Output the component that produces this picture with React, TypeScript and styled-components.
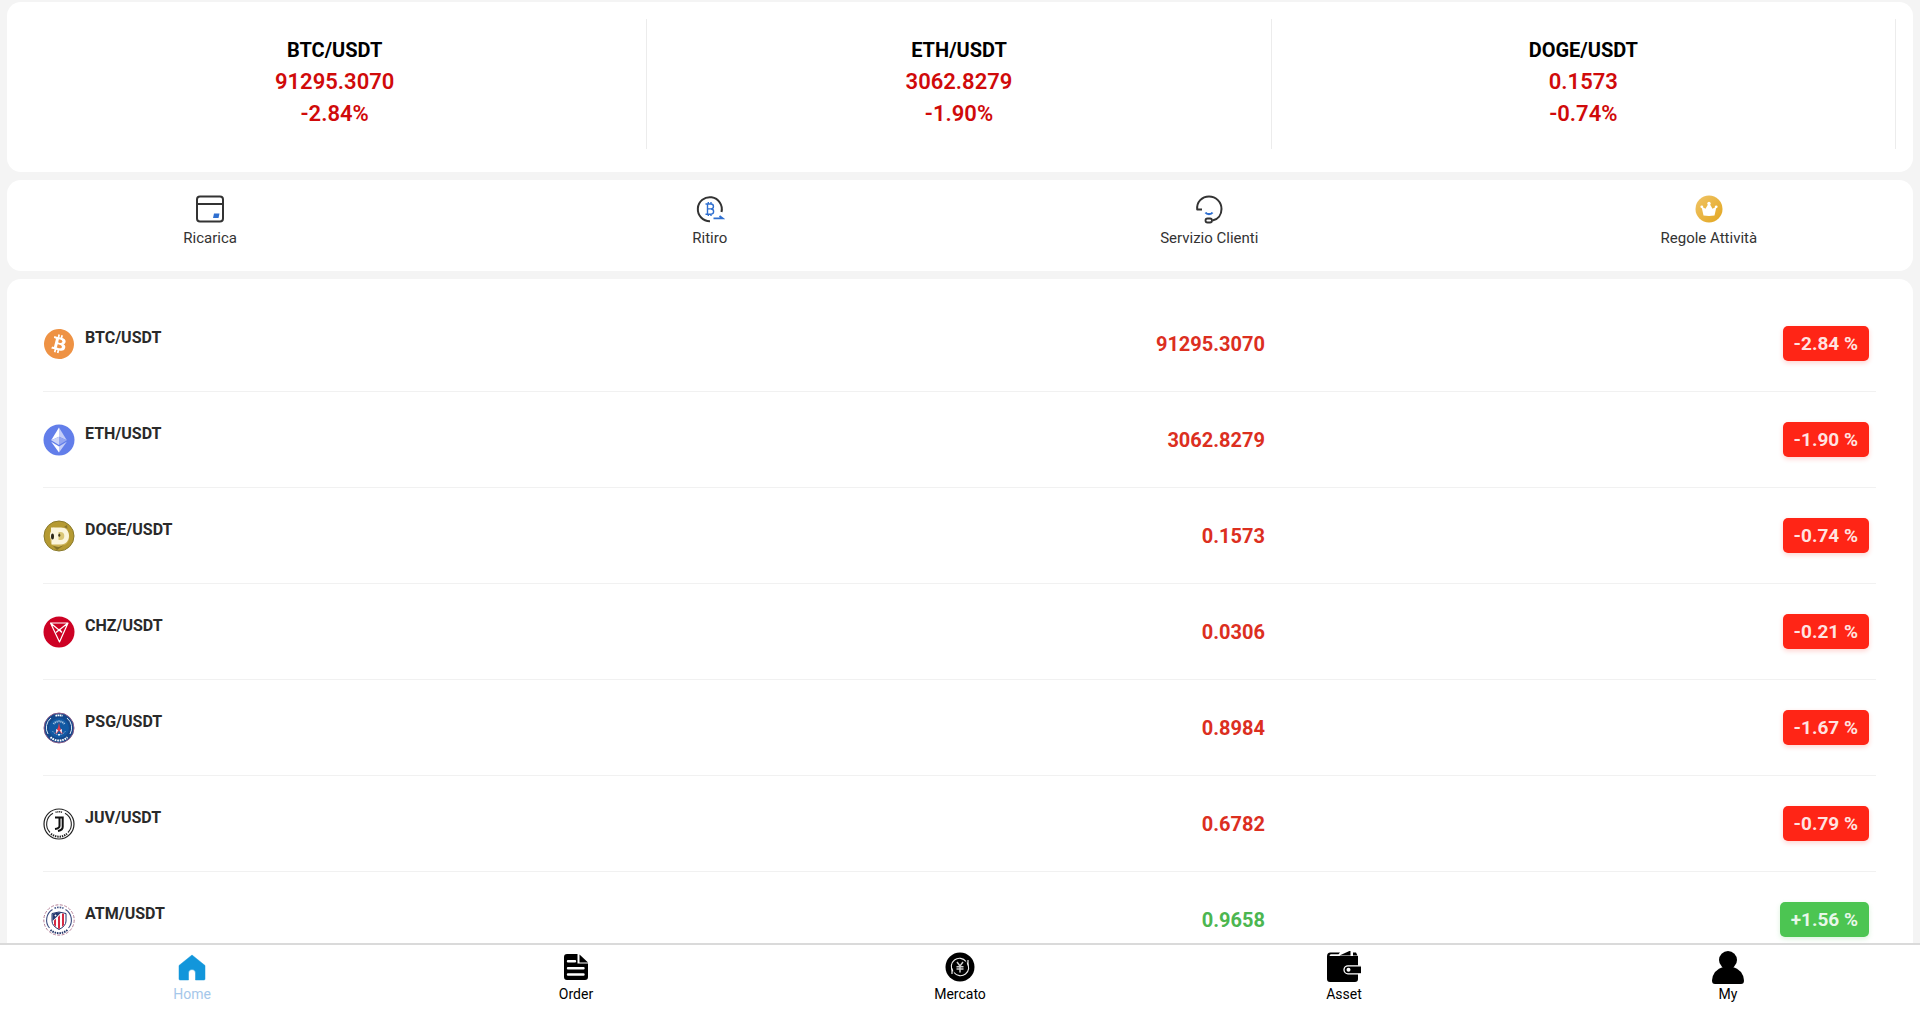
import React from "react";
import styled, { createGlobalStyle } from "styled-components";
import { SiBitcoin } from "react-icons/si";

const GlobalStyle = createGlobalStyle`
  *, *::before, *::after { box-sizing: border-box; }
  html { scrollbar-width: none; }
  body {
    margin: 0;
    background: #f4f4f4;
    color: #222;
    font-family: Roboto, "Noto Sans", sans-serif;
  }
`;

const RED = "#d00a0a";
const LIST_RED = "#dc2f1f";
const LIST_GREEN = "#4cb650";

const Page = styled.main`
  display: flex;
  flex-direction: column;
  gap: 8px;
  padding: 2px 7px 80px;
`;

const Card = styled.section`
  background: #fff;
  border-radius: 14px;
`;

const TickerCard = styled(Card)`
  display: grid;
  grid-template-columns: repeat(3, 1fr);
  padding: 17px 17px 23px 16px;
`;

const Ticker = styled.article`
  display: flex;
  flex-direction: column;
  align-items: center;
  height: 130px;
  padding-top: 15px;
  border-right: 1px solid #ececec;
  font-size: 22px;
  line-height: 32px;
  font-weight: 600;
  color: ${RED};
`;

const TickerName = styled.h2`
  margin: 0;
  font-size: 20px;
  line-height: 32px;
  font-weight: 700;
  color: #000;
`;

const ActionCard = styled(Card)`
  display: flex;
  justify-content: space-between;
  padding: 14px 5px 23px 4px;
`;

const Action = styled.button`
  display: flex;
  flex-direction: column;
  align-items: center;
  gap: 4px;
  width: 21%;
  padding: 0;
  border: 0;
  background: none;
  font-family: inherit;
  font-size: 15px;
  line-height: 20px;
  color: #333;
  cursor: pointer;
`;

const MarketCard = styled(Card)`
  padding: 17px 37px 17px 36px;
`;

const MarketTable = styled.table`
  width: 100%;
  table-layout: fixed;
  border-collapse: separate;
  border-spacing: 0;
`;

const NameCell = styled.th`
  height: 96px;
  padding: 0;
  border-bottom: 1px solid #f1f1f1;
  text-align: left;
`;

const Coin = styled.span`
  display: flex;
  align-items: center;
  gap: 10px;
`;

const CoinName = styled.span`
  padding-bottom: 12px;
  font-size: 16px;
  line-height: 20px;
  font-weight: 700;
  color: #2a2a2a;
`;

const ValueCell = styled.td<{ $color?: string }>`
  padding: 0;
  border-bottom: 1px solid #f1f1f1;
  text-align: right;
  font-size: 20px;
  line-height: 24px;
  font-weight: 700;
  color: ${(p) => p.$color};
`;

const BadgeCell = styled(ValueCell)`
  padding-right: 7px;
`;

const Badge = styled.span<{ $up: boolean }>`
  display: inline-block;
  padding: 0 11px;
  border-radius: 5px;
  font-size: 19px;
  line-height: 35px;
  color: rgba(255, 255, 255, 0.88);
  background: ${(p) => (p.$up ? "#4cc552" : "#ff2516")};
  box-shadow: 0 2px 5px ${(p) => (p.$up ? "rgba(76, 197, 82, 0.2)" : "rgba(255, 37, 22, 0.2)")};
`;

const TabBar = styled.nav`
  position: fixed;
  inset: auto 0 0;
  display: grid;
  grid-template-columns: repeat(5, 1fr);
  padding: 6px 0 10px;
  border-top: 2px solid #dadada;
  background: #fff;
`;

const Tab = styled.a<{ $active?: boolean }>`
  display: flex;
  flex-direction: column;
  align-items: center;
  font-size: 14px;
  line-height: 18px;
  text-decoration: none;
  color: ${(p) => (p.$active ? "#a5c7ea" : "#000")};
`;

/* ---- quick action icons ---- */

const CardIcon = () => (
  <svg width="30" height="30" viewBox="0 0 30 30" fill="none">
    <rect x="2" y="2.5" width="26" height="25" rx="3" stroke="#333" strokeWidth="2" />
    <path d="M2 10h26" stroke="#333" strokeWidth="2" />
    <path d="M19 19.500h5.500l-1 4.500H18z" fill="#2f6fd0" />
  </svg>
);

const WithdrawIcon = () => (
  <svg width="30" height="30" viewBox="0 0 30 30" fill="none">
    <path d="M15 27.200A12 12 0 1 1 26.500 18" stroke="#333" strokeWidth="2" />
    <path d="M10.500 10h5.500a2.400 2.400 0 0 1 0 4.900H12.500M16 15a2.600 2.600 0 0 1 0 5.200H10.500M12.500 10v10M13.300 8v2M16 8v2M13.300 20v2M16 20v2" stroke="#2f6fd0" strokeWidth="1.400" />
    <path d="M18.500 24.300h9L24.500 22" stroke="#2f6fd0" strokeWidth="1.800" />
  </svg>
);

const SupportIcon = () => (
  <svg width="30" height="30" viewBox="0 0 30 30" fill="none">
    <path d="M8 15.500H3.200C2.500 8 8 2.500 15 2.500S27.500 8 27.500 15c0 6-3.500 10.500-9 11.500" stroke="#333" strokeWidth="2" strokeLinejoin="round" />
    <rect x="11.500" y="24.500" width="6.500" height="4" rx="2" stroke="#333" strokeWidth="1.800" />
    <path d="M11.500 18.500c1.500 2.200 5.500 2.200 7 0" stroke="#2f6fd0" strokeWidth="2.200" />
  </svg>
);

const CrownIcon = () => (
  <svg width="30" height="30" viewBox="0 0 30 30">
    <defs>
      <linearGradient id="gold" x1="0" y1="0" x2="1" y2="1">
        <stop offset="0" stopColor="#f0c467" />
        <stop offset="1" stopColor="#e2a61f" />
      </linearGradient>
    </defs>
    <circle cx="15" cy="15" r="13.500" fill="url(#gold)" />
    <g fill="#fff">
      <path d="M7.500 12.500l4 2.200 2.600-4.500h1.800l2.600 4.500 4-2.200-2 9q-5.500.800-11 0z" />
      <circle cx="15" cy="9.500" r="1.700" />
      <circle cx="7.800" cy="12.800" r="1.400" />
      <circle cx="22.200" cy="12.800" r="1.400" />
    </g>
  </svg>
);

/* ---- coin logos ---- */

const BtcBack = styled.span`
  display: flex;
  width: 32px;
  height: 32px;
  border: 1px solid #fff;
  border-radius: 50%;
  background: #fff;
  color: #ee9244;
`;

const BtcLogo = () => (
  <BtcBack>
    <SiBitcoin size={30} />
  </BtcBack>
);

const EthLogo = () => (
  <svg width="32" height="32" viewBox="0 0 32 32">
    <circle cx="16" cy="16" r="15.500" fill="#627eea" />
    <path d="M16 3.500v9.300l7.800 3.500z" fill="#c3cdf8" />
    <path d="M16 3.500L8.200 16.300l7.800-3.500z" fill="#fff" />
    <path d="M16 12.800v8.100l7.800-4.600z" fill="#94a6f1" />
    <path d="M8.200 16.300l7.800 4.600v-8.100z" fill="#cbd4f9" />
    <path d="M16 22.400v6.100l7.800-10.700z" fill="#c3cdf8" />
    <path d="M8.200 17.800L16 28.500v-6.100z" fill="#fff" />
  </svg>
);

const DogeLogo = () => (
  <svg width="32" height="32" viewBox="0 0 32 32">
    <circle cx="16" cy="16" r="15" fill="#b59a32" stroke="#8a7a2c" strokeWidth="1" />
    <path d="M8 10l2.500-3 3 2 7-1 3.500-2 .500 5c3 5 2 11-2 13.500l-8 3-5-2.500C6 22 6.500 15 8 10z" fill="#cdb357" />
    <path d="M8 7.500H18c4.800 0 8 3.500 8 8.300S22.800 24.500 18 24.500H8.500v-5C6.500 18 6.500 13 8 12z" fill="#fbf5dc" />
    <path d="M15.500 12h2c2.400 0 3.800 1.600 3.800 4s-1.400 4-3.800 4h-2z" fill="#dac776" />
    <ellipse cx="9.500" cy="16.500" rx="1.500" ry="3" fill="#2c2717" />
    <ellipse cx="16.300" cy="15.200" rx="1" ry="1.600" fill="#4a4020" />
    <path d="M21 7l3-2 .500 4zM10 26l6 1 5-2-7 5z" fill="#6e5f22" opacity=".7" />
  </svg>
);

const ChzLogo = () => (
  <svg width="32" height="32" viewBox="0 0 32 32" fill="none">
    <circle cx="16" cy="16" r="15.500" fill="#cd0124" />
    <path d="M7.500 7h17.500L16.500 26zM7.500 7l11.500 9.500M25 7L13 16.500M13 16.500l3.500-3 2.500 3" stroke="#fff" strokeWidth="1.200" strokeLinejoin="round" />
  </svg>
);

const PsgLogo = () => (
  <svg width="32" height="32" viewBox="0 0 32 32" fill="none">
    <circle cx="16" cy="16" r="15" fill="#14498c" stroke="#8a5a86" strokeWidth="1" />
    <path d="M5 22A12.500 12.500 0 0 1 8 6M27 22A12.500 12.500 0 0 0 24 6" stroke="#dce8f5" strokeWidth="1" />
    <path d="M12.500 3.800A12.500 12.500 0 0 1 19.500 3.800" stroke="#fff" strokeWidth="1.800" strokeDasharray="1.600 .5" />
    <path d="M7.500 25.200A12.500 12.500 0 0 0 24.500 25.200" stroke="#fff" strokeWidth="1.900" strokeDasharray="1.700 .8" />
    <circle cx="16" cy="16" r="10" fill="#1259a3" />
    <path d="M10.500 12A7 7 0 0 1 21.500 12" stroke="#a9c6e3" strokeWidth="2" strokeDasharray="1.200 .7" />
    <path d="M9.500 19A7.500 7.500 0 0 0 22.500 19" stroke="#87aed3" strokeWidth="1" strokeDasharray="1.500 .8" />
    <path d="M16 10.500l.8 4.500 3 6.500h-1.700l-2.100-3-2.100 3h-1.700l3-6.500z" fill="#e4394c" />
    <path d="M13 17l2.200 1.200-2 3.300zM19 17l-2.200 1.200 2 3.300zM15 22h2v1.500h-2z" fill="#e8eef6" />
  </svg>
);

const JuvLogo = () => (
  <svg width="32" height="32" viewBox="0 0 32 32" fill="none">
    <circle cx="16" cy="16" r="15" fill="#fff" stroke="#222" strokeWidth="1.200" />
    <path d="M7 24.500A12.400 12.400 0 0 1 10 5.200M25 24.500A12.400 12.400 0 0 0 22 5.200" stroke="#222" strokeWidth="1.100" />
    <path d="M12.500 4.300A12.200 12.200 0 0 1 19.500 4.300" stroke="#333" strokeWidth="1.500" strokeDasharray="1.200 .6" />
    <path d="M8 25.800A12.600 12.600 0 0 0 24 25.800" stroke="#222" strokeWidth="2" strokeDasharray="1.400 .9" />
    <path d="M12 9.500h4.500V18q0 2.300-4.500 3M17.500 9.500h2.200V19q0 3-4.700 4" stroke="#111" strokeWidth="2" />
  </svg>
);

const AtmLogo = () => (
  <svg width="32" height="32" viewBox="0 0 32 32" fill="none">
    <circle cx="16" cy="16" r="15.200" fill="#fff" stroke="#b58098" strokeWidth="1" strokeDasharray="3 1.500" />
    <path d="M6.500 24A12.400 12.400 0 0 1 9.500 5.500M25.500 24A12.400 12.400 0 0 0 22.500 5.500" stroke="#3b4c80" strokeWidth="1.100" />
    <path d="M11.500 4.200A12.400 12.400 0 0 1 20.500 4.200" stroke="#46598c" strokeWidth="1.700" strokeDasharray="1.600 1" />
    <path d="M7.500 26A12.900 12.900 0 0 0 24.500 26" stroke="#26376b" strokeWidth="2" strokeDasharray="1.500 .9" />
    <path d="M9 9.500q7-3 14 0v7.500q0 5-7 8.500-7-3.500-7-8.500z" fill="#fff" stroke="#25386f" strokeWidth="1" />
    <path d="M9.500 9.800q4-1.600 9-1.500L9.500 17z" fill="#25386f" />
    <path d="M11 16.500l2-1.800v8.300l-2-2zM15 13l2-2v13.500l-1 .500-1-.500zM19 9.500l2 .3V21l-2 2z" fill="#d42b43" />
    <path d="M11.500 11.500h2M12.500 10.500v2" stroke="#fff" strokeWidth=".8" />
  </svg>
);

/* ---- tab bar icons ---- */

const HomeIcon = () => (
  <svg width="34" height="34" viewBox="0 0 34 34">
    <path d="M17 4L4 14.500V28q0 1 1 1h8.500v-7a3.500 3.500 0 0 1 7 0v7H29q1 0 1-1V14.500z" fill="#1296db" stroke="#1296db" strokeWidth=".5" strokeLinejoin="round" />
  </svg>
);

const OrderIcon = () => (
  <svg width="34" height="34" viewBox="0 0 34 34">
    <path d="M8 3h10.500v9.500H29V26q0 3-3 3H8q-3 0-3-3V6q0-3 3-3z" fill="#000" />
    <path d="M20.500 3.500l8.500 8h-8.500z" fill="#000" />
    <path d="M9 10.200h7M9 17.200h15.500M9 23.500h15.500" stroke="#fff" strokeWidth="2.400" strokeLinecap="round" />
  </svg>
);

const MarketIcon = () => (
  <svg width="34" height="34" viewBox="0 0 34 34" fill="none">
    <circle cx="17" cy="16" r="14.500" fill="#000" />
    <path d="M10 20.500A8.200 8.200 0 0 1 23 10.500M24 11.500A8.200 8.200 0 0 1 11 21.500" stroke="#eee" strokeWidth="1.100" />
    <path d="M25 9v5.500M9 17.500V23" stroke="#eee" strokeWidth="1.200" />
    <path d="M14 11l3 4 3-4M13.500 15.800h7M13.500 18h7M17 15v6.500" stroke="#ccc" strokeWidth="1.500" />
  </svg>
);

const WalletIcon = () => (
  <svg width="34" height="34" viewBox="0 0 34 34">
    <path d="M0 5.500q0-4 3.500-4H13l-1.500 1.700H4q-1.500 0-1.500 1.800H31V28q0 3-3 3H3q-3 0-3-3z" fill="#000" />
    <path d="M12.500 4.500L23.500-.5v5zM26 1.500h3l1.500 3H26z" fill="#000" />
    <path d="M34 14.800H21a4 4 0 0 0 0 8h13" fill="#000" stroke="#fff" strokeWidth="1.300" />
    <circle cx="21.500" cy="18.800" r="2" fill="#fff" />
  </svg>
);

const UserIcon = () => (
  <svg width="34" height="34" viewBox="0 0 34 34">
    <circle cx="17" cy="9" r="9" fill="#000" />
    <path d="M12 16h10q4 1 8 5 3 4 3 8.500 0 3.500-3 3.500H4q-3 0-3-3.500Q1 25 4 21q4-4 8-5z" fill="#000" />
  </svg>
);

const tickers = [
  { name: "BTC/USDT", price: "91295.3070", change: "-2.84%" },
  { name: "ETH/USDT", price: "3062.8279", change: "-1.90%" },
  { name: "DOGE/USDT", price: "0.1573", change: "-0.74%" },
];

const actions = [
  { label: "Ricarica", Icon: CardIcon },
  { label: "Ritiro", Icon: WithdrawIcon },
  { label: "Servizio Clienti", Icon: SupportIcon },
  { label: "Regole Attività", Icon: CrownIcon },
];

const markets = [
  { name: "BTC/USDT", price: "91295.3070", change: "-2.84 %", Logo: BtcLogo },
  { name: "ETH/USDT", price: "3062.8279", change: "-1.90 %", Logo: EthLogo },
  { name: "DOGE/USDT", price: "0.1573", change: "-0.74 %", Logo: DogeLogo },
  { name: "CHZ/USDT", price: "0.0306", change: "-0.21 %", Logo: ChzLogo },
  { name: "PSG/USDT", price: "0.8984", change: "-1.67 %", Logo: PsgLogo },
  { name: "JUV/USDT", price: "0.6782", change: "-0.79 %", Logo: JuvLogo },
  { name: "ATM/USDT", price: "0.9658", change: "+1.56 %", Logo: AtmLogo },
];

const tabs = [
  { label: "Home", Icon: HomeIcon, active: true },
  { label: "Order", Icon: OrderIcon },
  { label: "Mercato", Icon: MarketIcon },
  { label: "Asset", Icon: WalletIcon },
  { label: "My", Icon: UserIcon },
];

export default function App() {
  return (
    <>
      <GlobalStyle />
      <Page>
        <TickerCard>
          {tickers.map((t) => (
            <Ticker key={t.name}>
              <TickerName>{t.name}</TickerName>
              <span>{t.price}</span>
              <span>{t.change}</span>
            </Ticker>
          ))}
        </TickerCard>
        <ActionCard>
          {actions.map(({ label, Icon }) => (
            <Action key={label} type="button">
              <Icon />
              <span>{label}</span>
            </Action>
          ))}
        </ActionCard>
        <MarketCard>
          <MarketTable>
            <tbody>
              {markets.map(({ name, price, change, Logo }) => {
                const up = change.startsWith("+");
                return (
                  <tr key={name}>
                    <NameCell scope="row">
                      <Coin>
                        <Logo />
                        <CoinName>{name}</CoinName>
                      </Coin>
                    </NameCell>
                    <ValueCell $color={up ? LIST_GREEN : LIST_RED}>{price}</ValueCell>
                    <BadgeCell>
                      <Badge $up={up}>{change}</Badge>
                    </BadgeCell>
                  </tr>
                );
              })}
            </tbody>
          </MarketTable>
        </MarketCard>
      </Page>
      <TabBar>
        {tabs.map(({ label, Icon, active }) => (
          <Tab key={label} href="#" $active={active}>
            <Icon />
            <span>{label}</span>
          </Tab>
        ))}
      </TabBar>
    </>
  );
}
